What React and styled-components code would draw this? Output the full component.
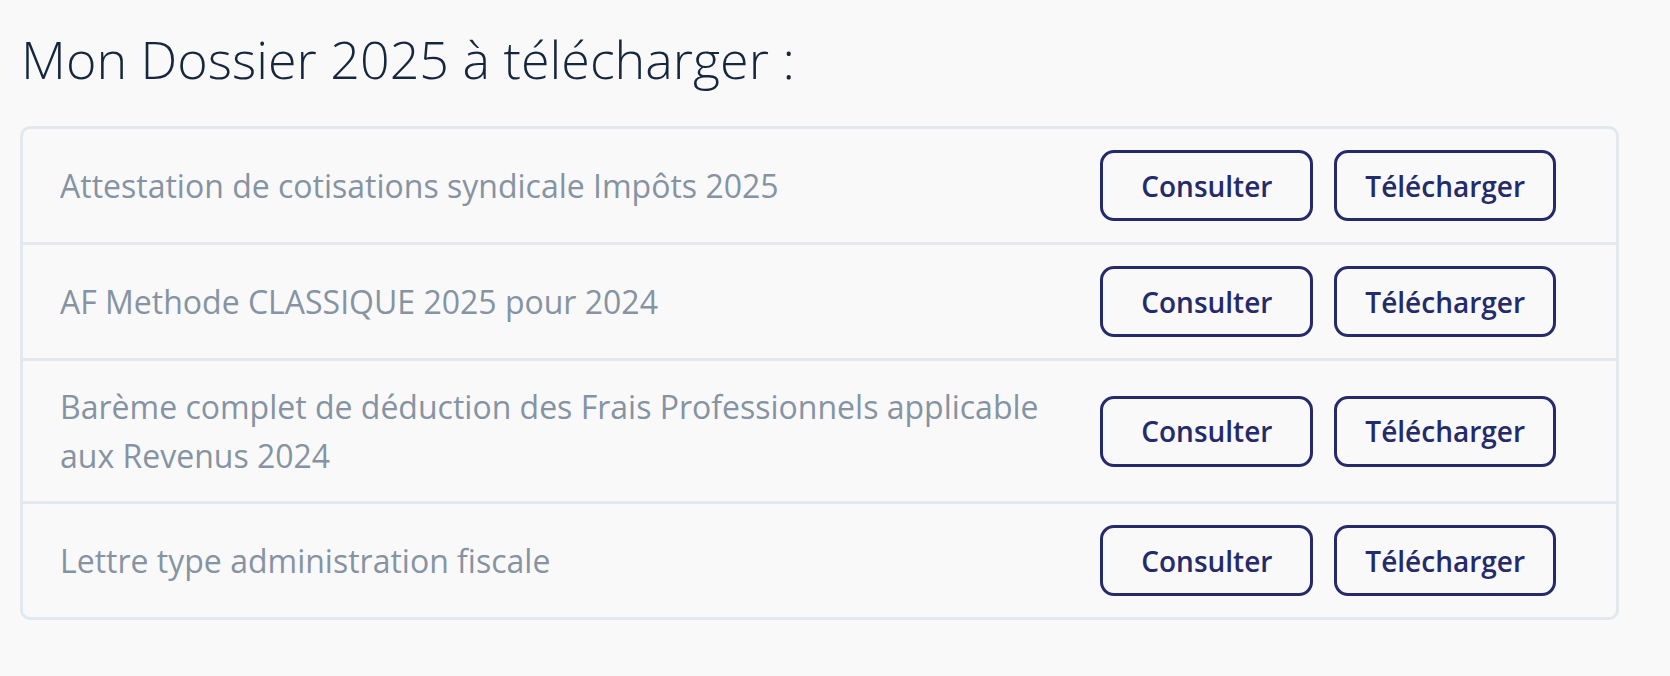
import React from "react";
import styled, { createGlobalStyle } from "styled-components";

const GlobalStyle = createGlobalStyle`
  html, body {
    margin: 0;
    padding: 0;
    background: #f9f9fa;
  }
  body {
    font-family: "Open Sans", "Noto Sans", Arial, sans-serif;
  }
`;

const Page = styled.main`
  padding: 28px 51px 0 20px;
`;

const Title = styled.h1`
  margin: 0 0 36px 0;
  padding-left: 1px;
  font-family: "Open Sans", sans-serif;
  font-weight: 300;
  font-size: 52px;
  line-height: 1.2;
  color: #16273d;
`;

const Card = styled.section`
  border: 3px solid #e3e8ef;
  border-radius: 10px;
  overflow: hidden;
`;

const Row = styled.div`
  display: flex;
  align-items: center;
  gap: 40px;
  padding: 21px 60px 21px 37px;
  & + & {
    border-top: 3px solid #e3e8ef;
  }
`;

const Label = styled.div`
  flex: 1;
  font-family: "Open Sans", sans-serif;
  font-size: 32px;
  line-height: 49px;
  color: #8593a2;
`;

const Actions = styled.div`
  display: flex;
  gap: 21px;
  flex-shrink: 0;
`;

const Button = styled.button`
  min-width: 213px;
  height: 71px;
  padding: 0 28px;
  box-sizing: border-box;
  border: 3px solid #252a6b;
  border-radius: 14px;
  background: transparent;
  color: #252a6b;
  font-family: "Open Sans", sans-serif;
  font-weight: 600;
  font-size: 28px;
  cursor: pointer;
`;

const docs = [
  "Attestation de cotisations syndicale Impôts 2025",
  "AF Methode CLASSIQUE 2025 pour 2024",
  "Barème complet de déduction des Frais Professionnels applicable aux Revenus 2024",
  "Lettre type administration fiscale",
];

export default function App() {
  return (
    <>
      <GlobalStyle />
      <Page>
        <Title>Mon Dossier 2025 à télécharger :</Title>
        <Card>
          {docs.map((d) => (
            <Row key={d}>
              <Label>{d}</Label>
              <Actions>
                <Button>Consulter</Button>
                <Button>Télécharger</Button>
              </Actions>
            </Row>
          ))}
        </Card>
      </Page>
    </>
  );
}
